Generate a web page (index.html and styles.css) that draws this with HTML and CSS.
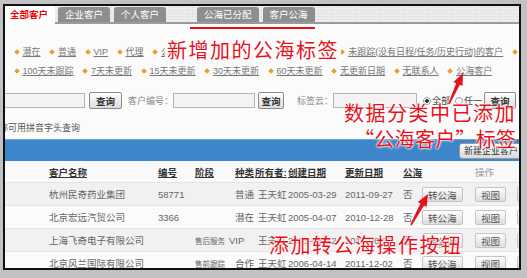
FILE: index.html
```html
<!DOCTYPE html>
<html lang="zh-CN">
<head>
    <meta charset="UTF-8">
    <title>客户管理</title>
    <link rel="stylesheet" href="styles.css">
</head>
<body>
    <div class="frame">
        <div class="tabbar">
            <span class="tab active">全部客户</span>
            <span class="tab">企业客户</span>
            <span class="tab">个人客户</span>
            <span class="tab group">公海已分配</span>
            <span class="tab">客户公海</span>
        </div>

        <div class="filters">
            <div class="filter-row">
                <span class="dot"></span><a>潜在</a>
                <span class="dot"></span><a>普通</a>
                <span class="dot"></span><a>VIP</a>
                <span class="dot"></span><a>代理</a>
                <span class="dot"></span><a>公海</a>
                <span class="dot"></span><a>售前跟踪</a>
                <span class="dot"></span><a>售后服务</a>
                <span class="dot"></span><a>供应商</a>
                <span class="dot"></span><a>未跟踪(没有日程/任务/历史行动)的客户</a>
                <span class="dot"></span><a>其他</a>
            </div>
            <div class="filter-row">
                <span class="dot"></span><a>100天未跟踪</a>
                <span class="dot"></span><a>7天未更新</a>
                <span class="dot"></span><a>15天未更新</a>
                <span class="dot"></span><a>30天未更新</a>
                <span class="dot"></span><a>60天未更新</a>
                <span class="dot"></span><a>无更新日期</a>
                <span class="dot"></span><a>无联系人</a>
                <span class="dot"></span><a>公海客户</a>
            </div>
        </div>

        <div class="search">
            <input class="field first" type="text">
            <button class="btn">查询</button>
            <label class="lbl">客户编号：</label>
            <input class="field" type="text">
            <button class="btn narrow">查询</button>
            <label class="lbl wide">标签云：</label>
            <input class="field tags" type="text">
            <input class="radio" type="radio" name="m" checked><span class="opt">全部</span>
            <input class="radio" type="radio" name="m"><span class="opt">任一</span>
            <button class="btn last">查询</button>
        </div>

        <div class="hint">称可用拼音字头查询</div>

        <div class="bluebar">
            <button class="new-btn">新建企业客户</button>
        </div>

        <div class="row head">
            <span></span>
            <span class="th">客户名称</span>
            <span class="th">编号</span>
            <span class="th">阶段</span>
            <span class="th">种类</span>
            <span class="th owner">所有者:</span>
            <span class="th">创建日期</span>
            <span class="th">更新日期</span>
            <span class="th">公海</span>
            <span></span>
            <span class="ops">操作</span>
        </div>
        <div class="row alt">
            <span></span>
            <span>杭州民奇药业集团</span>
            <span>58771</span>
            <span class="stage"></span>
            <span>普通</span>
            <span>王天虹</span>
            <span>2005-03-29</span>
            <span>2011-09-27</span>
            <span>否</span>
            <span><button class="cell-btn">转公海</button></span>
            <span><button class="cell-btn">视图</button></span>
            <span><button class="cell-btn">编辑</button></span>
        </div>
        <div class="row">
            <span></span>
            <span>北京宏远汽贸公司</span>
            <span>3366</span>
            <span class="stage"></span>
            <span>潜在</span>
            <span>王天虹</span>
            <span>2005-04-07</span>
            <span>2010-12-28</span>
            <span>否</span>
            <span><button class="cell-btn">转公海</button></span>
            <span><button class="cell-btn">视图</button></span>
            <span><button class="cell-btn">编辑</button></span>
        </div>
        <div class="row alt">
            <span></span>
            <span>上海飞奇电子有限公司</span>
            <span></span>
            <span class="stage">售后服务</span>
            <span class="shift">VIP</span>
            <span>王天虹</span>
            <span>2005-05-12</span>
            <span>2011-06-30</span>
            <span>否</span>
            <span><button class="cell-btn">转公海</button></span>
            <span><button class="cell-btn">视图</button></span>
            <span><button class="cell-btn">编辑</button></span>
        </div>
        <div class="row">
            <span></span>
            <span>北京风兰国际有限公司</span>
            <span></span>
            <span class="stage">售前跟踪</span>
            <span>合作</span>
            <span>王天虹</span>
            <span>2006-04-14</span>
            <span>2011-12-02</span>
            <span>否</span>
            <span><button class="cell-btn">转公海</button></span>
            <span><button class="cell-btn">视图</button></span>
            <span><button class="cell-btn">编辑</button></span>
        </div>

        <!-- annotations drawn over the screenshot -->
        <div class="underline"></div>
        <div class="note note-tabs">新增加的公海标签</div>
        <div class="note note-data">数据分类中已添加</div>
        <div class="note note-data2">“公海客户”标签</div>
        <div class="note note-btn">添加转公海操作按钮</div>
        <svg class="arrows" width="518" height="266" viewBox="3 4 518 266">
            <polygon points="463,73 462.5,86.1 459.8,84.8 449.7,104.3 448.3,103.7 456.2,83.2 453.5,81.9" fill="#e8101a"/>
            <polygon points="428,194 426.6,206.9 424,205.5 411.7,225.4 410.3,224.6 420.4,203.5 417.8,202.1" fill="#e8101a"/>
        </svg>
    </div>
</body>
</html>
```

FILE: styles.css
```css
body {
    margin: 0;
    background: #c2c2c2;
    font-family: "Liberation Sans", "Noto Sans CJK SC", sans-serif;
    font-size: 9px;
    color: #666;
}
.frame {
    position: relative;
    box-sizing: border-box;
    width: 518px;
    height: 266px;
    margin: 4px 0 0 3px;
    border: 2px solid #111;
    background: #fbfbfb;
    overflow: hidden;
}
.tabbar {
    display: flex;
    align-items: flex-end;
    height: 16px;
    border-bottom: 2px solid #9b9b9b;
    background-color: #ececec;
    background-image: radial-gradient(#d6d6d6 0.7px, transparent 0.9px);
    background-size: 3px 3px;
}
.tab {
    height: 15px;
    line-height: 15px;
    padding: 0 7px;
    margin-right: 4px;
    background: #8e8e8e;
    color: #fff;
    font-family: "Noto Sans CJK SC", sans-serif;
    font-size: 9.5px;
    border-radius: 3px 3px 0 0;
}
.tab.active {
    height: 18px;
    line-height: 16px;
    margin-bottom: -2px;
    padding: 0 5px;
    width: 40px;
    margin-right: 3px;
    background: #fff;
    color: #e00;
    font-weight: bold;
    border-radius: 0;
}
.tab.group {
    margin-left: 27px;
}
.filters {
    margin-top: 18px;
    padding-left: 6px;
}
.filter-row {
    display: flex;
    align-items: center;
    height: 19px;
    white-space: nowrap;
}
.filter-row a {
    color: #777;
    text-decoration: underline;
    margin-right: 6px;
}
.dot {
    display: inline-block;
    width: 4px;
    height: 4px;
    margin: 0 4px 0 3.5px;
    background: #f39a2b;
    transform: rotate(45deg);
    flex-shrink: 0;
}
.search {
    display: flex;
    align-items: center;
    height: 17px;
    margin-top: 12px;
    white-space: nowrap;
}
.field {
    box-sizing: border-box;
    width: 82px;
    height: 15px;
    margin: 0;
    padding: 0;
    border: 1px solid #b4b4b4;
    background: #f3f3f3;
    flex-shrink: 0;
}
.field.first {
    width: 80px;
    border-left: none;
}
.field.tags {
    width: 84px;
    margin-right: 1px;
}
.btn {
    box-sizing: border-box;
    width: 33px;
    height: 17px;
    margin: 0 0 0 4px;
    padding: 0;
    border: 1px solid #8a8a8a;
    border-radius: 2px;
    background: linear-gradient(#fff, #dcdcdc);
    font-family: "Noto Sans CJK SC", sans-serif;
    font-size: 9.5px;
    font-weight: bold;
    color: #333;
    flex-shrink: 0;
}
.btn.narrow {
    width: 26px;
    margin-left: 3px;
}
.btn.last {
    width: 32px;
    margin-left: 2px;
}
.lbl {
    margin: 0 0 0 6px;
    color: #888;
}
.lbl.wide {
    margin-left: 13px;
}
.radio {
    appearance: none;
    box-sizing: border-box;
    width: 8px;
    height: 8px;
    margin: 0 1px 0 5px;
    border: 1px solid #999;
    border-radius: 50%;
    background: #fff;
    flex-shrink: 0;
}
.radio:checked {
    background: radial-gradient(#333 1.6px, #fff 2px);
}
.opt {
    color: #444;
}
.hint {
    height: 12px;
    line-height: 12px;
    margin-top: 13px;
    text-indent: -6px;
    color: #555;
    white-space: nowrap;
}
.bluebar {
    display: flex;
    justify-content: flex-end;
    align-items: center;
    box-sizing: border-box;
    height: 22px;
    margin-top: 5px;
    border-top: 1px solid #6aa5da;
    background: #3e86ca;
}
.new-btn {
    height: 16px;
    width: 66px;
    margin-right: -6px;
    padding: 0 4px;
    border: 1px solid #999;
    border-radius: 3px;
    background: linear-gradient(#fbfbfb, #dadada);
    font-family: "Noto Sans CJK SC", sans-serif;
    font-size: 9px;
    color: #333;
    white-space: nowrap;
    text-align: left;
}
.row {
    display: grid;
    grid-template-columns: 44px 109px 37px 40px 23px 30px 57px 58px 19px 53px 42px 30px;
    align-items: center;
    box-sizing: border-box;
    height: 23px;
    border-bottom: 1px solid #e4e4e4;
    font-size: 9.5px;
    white-space: nowrap;
}
.row.head {
    height: 22px;
    background: #f9f9f9;
}
.row.alt {
    background: #f1f1f1;
}
.th {
    color: #333;
    font-weight: bold;
    text-decoration: underline;
}
.th.owner {
    margin-left: -3px;
}
.ops {
    color: #999;
}
.stage {
    font-size: 7.5px;
}
.shift {
    margin-left: -6px;
}
.cell-btn {
    box-sizing: border-box;
    height: 15px;
    padding: 0 5px;
    border: 1px solid #c4c4c4;
    border-radius: 2px;
    background: linear-gradient(#fdfdfd, #dedede);
    font-family: "Noto Sans CJK SC", sans-serif;
    font-size: 9.5px;
    color: #555;
}
.underline {
    position: absolute;
    left: 185px;
    top: 21px;
    width: 125px;
    height: 2px;
    background: #e8101a;
}
.note {
    position: absolute;
    font-family: "Noto Sans CJK SC", sans-serif;
    font-size: 20px;
    line-height: 24px;
    letter-spacing: 1.5px;
    color: #e8101a;
    white-space: nowrap;
    text-shadow: 0 0 2px #fff, 0 0 2px #fff, 0 0 3px #fff;
}
.note-tabs {
    left: 160px;
    top: 32px;
    padding: 0 2px;
    background: #fbfbfb;
}
.note-data {
    left: 339px;
    top: 95px;
}
.note-data2 {
    left: 349px;
    top: 121px;
    letter-spacing: 0.3px;
}
.note-btn {
    left: 264px;
    top: 227px;
}
.arrows {
    position: absolute;
    left: -2px;
    top: -2px;
}
```
